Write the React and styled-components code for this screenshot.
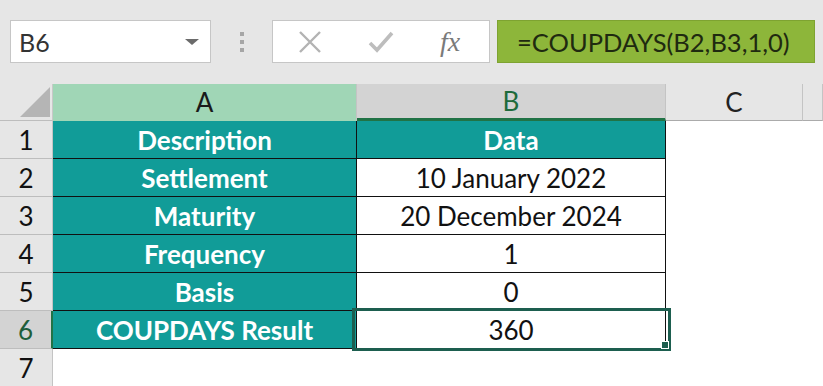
import React from 'react'
import styled, { createGlobalStyle } from 'styled-components'

const GlobalStyle = createGlobalStyle`
  html, body { margin: 0; padding: 0; background: #e6e6e6; }
  body { font-family: Lato, "Open Sans", sans-serif; overflow: hidden; }
`

const rows = [
  { label: 'Description', value: 'Data', head: true },
  { label: 'Settlement', value: '10 January 2022' },
  { label: 'Maturity', value: '20 December 2024' },
  { label: 'Frequency', value: '1' },
  { label: 'Basis', value: '0' },
  { label: 'COUPDAYS Result', value: '360', selected: true },
]

const App = () => {
  return (
    <Page>
      <GlobalStyle />
      <Toolbar>
        <NameBox>
          <NameText>B6</NameText>
          <Caret />
        </NameBox>
        <Grip>
          <Dot />
          <Dot />
          <Dot />
        </Grip>
        <FuncBox>
          <FuncIcon>
            <svg width="24" height="24" viewBox="0 0 24 24">
              <path d="M2 2 L22 22 M22 2 L2 22" stroke="#b3b3b3" strokeWidth="2.4" fill="none" />
            </svg>
          </FuncIcon>
          <FuncIcon>
            <svg width="26" height="24" viewBox="0 0 26 24">
              <path d="M2 13 L9 20 L24 3" stroke="#bdbdbd" strokeWidth="3.6" fill="none" />
            </svg>
          </FuncIcon>
          <Fx>fx</Fx>
        </FuncBox>
        <FormulaBox>=COUPDAYS(B2,B3,1,0)</FormulaBox>
      </Toolbar>

      <Sheet>
        <Corner>
          <svg width="32" height="32" viewBox="0 0 32 32">
            <polygon points="32,2 32,32 2,32" fill="#b5b5b5" />
          </svg>
        </Corner>
        <ColHead $tone="green">A</ColHead>
        <ColHead $tone="active">B</ColHead>
        <ColHead>C</ColHead>
        <ColHead />

        {rows.map((r, i) => (
          <React.Fragment key={r.label}>
            <RowHead $active={r.selected}>{i + 1}</RowHead>
            <LabelCell>{r.label}</LabelCell>
            <ValueCell $head={r.head} $selected={r.selected}>{r.value}</ValueCell>
            <Blank />
            <Blank />
          </React.Fragment>
        ))}

        <RowHead $last>7</RowHead>
        <Blank />
        <Blank />
        <Blank />
        <Blank />
      </Sheet>
    </Page>
  )
}

export default App

const Page = styled.div`
  width: 823px;
  height: 386px;
  background: #e6e6e6;
  display: flex;
  flex-direction: column;
`

const Toolbar = styled.div`
  display: flex;
  align-items: flex-start;
  height: 84px;
  box-sizing: border-box;
  padding: 20px 0 0 10px;
`

const NameBox = styled.div`
  width: 201px;
  height: 43px;
  box-sizing: border-box;
  background: #fff;
  border: 1px solid #c6c6c6;
  display: flex;
  align-items: center;
  justify-content: space-between;
  padding: 0 11px 0 8px;
`

const NameText = styled.span`
  font-size: 25px;
  color: #333;
`

const Caret = styled.span`
  width: 0;
  height: 0;
  border-left: 7px solid transparent;
  border-right: 7px solid transparent;
  border-top: 6px solid #6b6b6b;
`

const Grip = styled.div`
  width: 61px;
  height: 43px;
  display: flex;
  flex-direction: column;
  align-items: center;
  justify-content: center;
  gap: 4px;
`

const Dot = styled.span`
  width: 4px;
  height: 4px;
  background: #a6a6a6;
`

const FuncBox = styled.div`
  width: 218px;
  height: 43px;
  box-sizing: border-box;
  background: #fff;
  border: 1px solid #c6c6c6;
  display: flex;
  align-items: center;
  padding-left: 25px;
  gap: 46px;
`

const FuncIcon = styled.span`
  display: flex;
  align-items: center;
`

const Fx = styled.span`
  font-family: "Liberation Serif", serif;
  font-style: italic;
  font-size: 28px;
  color: #7a7a7a;
  margin-left: 0;
`

const FormulaBox = styled.div`
  margin-left: 7px;
  width: 318px;
  height: 43px;
  box-sizing: border-box;
  background: #8db63a;
  border: 1px solid #7ea331;
  display: flex;
  align-items: center;
  padding-left: 19px;
  font-size: 25.5px;
  color: #1f2a10;
`

const Sheet = styled.div`
  flex: 1;
  display: grid;
  grid-template-columns: 53px 304px 309px 137px 1fr;
  grid-template-rows: 37px repeat(6, 38px) 1fr;
  background: #fff;
`

const Corner = styled.div`
  background: #e6e6e6;
  border-right: 1px solid #c8c8c8;
  border-bottom: 1px solid #bdbdbd;
  box-sizing: border-box;
  display: flex;
  align-items: flex-end;
  justify-content: flex-end;
  padding: 0 2px 3px 0;
`

const headTones = {
  green: { bg: '#a0d6b6', color: '#1a1a1a', line: '#a0d6b6' },
  active: { bg: '#d3d3d3', color: '#1e6b3c', line: '#217346' },
  plain: { bg: '#e6e6e6', color: '#222', line: '#ababab' },
}

const ColHead = styled.div`
  box-sizing: border-box;
  background: ${p => headTones[p.$tone || 'plain'].bg};
  color: ${p => headTones[p.$tone || 'plain'].color};
  border-bottom: ${p => (p.$tone === 'active' ? 3 : 1)}px solid ${p => headTones[p.$tone || 'plain'].line};
  border-right: 1px solid #c4c4c4;
  display: flex;
  align-items: center;
  justify-content: center;
  font-size: 26px;
`

const RowHead = styled.div`
  box-sizing: border-box;
  background: ${p => (p.$active ? '#d3d3d3' : '#e6e6e6')};
  color: ${p => (p.$active ? '#1e5e3a' : '#111')};
  border-bottom: ${p => (p.$last ? 'none' : '1px solid #bdbdbd')};
  border-right: ${p => (p.$active ? '2px solid #217346' : '1px solid #c4c4c4')};
  display: flex;
  align-items: center;
  justify-content: center;
  font-size: 26px;
`

const LabelCell = styled.div`
  box-sizing: border-box;
  background: #119c98;
  color: #fff;
  font-weight: 700;
  font-size: 26px;
  border-bottom: 1px solid #111;
  border-right: 1px solid #111;
  display: flex;
  align-items: center;
  justify-content: center;
`

const ValueCell = styled.div`
  position: relative;
  box-sizing: border-box;
  background: ${p => (p.$head ? '#119c98' : '#fff')};
  color: ${p => (p.$head ? '#fff' : '#111')};
  font-weight: ${p => (p.$head ? 700 : 400)};
  font-size: 26px;
  border-bottom: 1px solid #111;
  border-right: 1px solid #111;
  display: flex;
  align-items: center;
  justify-content: center;

  ${p => p.$selected && `
    &::after {
      content: '';
      position: absolute;
      left: -5px;
      top: -3px;
      right: -6px;
      bottom: -3px;
      border: 3px solid #1d5e4f;
    }
    &::before {
      content: '';
      position: absolute;
      right: -4px;
      bottom: -1px;
      width: 6px;
      height: 6px;
      background: #1d5e4f;
      border: 1px solid #fff;
      z-index: 1;
    }
  `}
`

const Blank = styled.div`
  background: #fff;
`
